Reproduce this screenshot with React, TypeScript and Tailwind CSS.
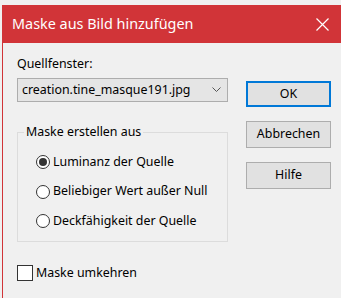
const font = { fontFamily: '"Noto Sans", "Open Sans", sans-serif' }

function Radio({ label, checked }: { label: string; checked?: boolean }) {
  return (
    <div className="flex items-center h-[20px]">
      <div className="w-[14px] h-[14px] rounded-full border border-[#333] bg-white flex items-center justify-center">
        {checked && <div className="w-[8px] h-[8px] rounded-full bg-[#333]" />}
      </div>
      <span className="ml-[3px] text-[12.4px] text-black leading-none">{label}</span>
    </div>
  )
}

function Btn({ label, focus }: { label: string; focus?: boolean }) {
  return (
    <button
      className={
        'w-[85px] flex items-center justify-center text-[12.4px] text-black bg-[#e1e1e1] ' +
        (focus ? 'h-[26px] border-2 border-[#0078d7]' : 'h-[27px] border border-[#adadad]')
      }
    >
      {label}
    </button>
  )
}

export default function App() {
  return (
    <div className="w-[341px] h-[298px] bg-[#f0f0f0] pt-[5px] pl-[2px] overflow-hidden" style={font}>
      <div className="h-full border-l border-[#d13438] flex flex-col">
        {/* Title bar */}
        <div className="h-[38px] bg-[#d13438] flex items-center justify-between pl-[9px] pr-[12px] shrink-0">
          <span className="text-white text-[14.4px]">Maske aus Bild hinzufügen</span>
          <svg width="13" height="13" viewBox="0 0 13 13">
            <path d="M0.5 0.5 L12.5 12.5 M12.5 0.5 L0.5 12.5" stroke="white" strokeWidth="1.2" />
          </svg>
        </div>

        {/* Body */}
        <div className="flex pl-[14px] pt-[12px] gap-[18px]">
          <div className="w-[211px] flex flex-col">
            <div className="text-[12.4px] text-black leading-[18px]">Quellfenster:</div>
            <div className="mt-[5px] h-[24px] bg-[#e5e5e5] border border-[#adadad] flex items-center justify-between pl-[4px] pr-[6px]">
              <span className="text-[12.4px] text-black">creation.tine_masque191.jpg</span>
              <svg width="9" height="6" viewBox="0 0 9 6">
                <path d="M0.5 0.5 L4.5 4.5 L8.5 0.5" stroke="#555" fill="none" strokeWidth="1" />
              </svg>
            </div>

            <div className="relative mt-[30px] h-[110px] border border-[#dcdcdc] pl-[18px] pt-[19px] flex flex-col gap-[9.5px]">
              <span className="absolute -top-[10px] left-[6px] bg-[#f0f0f0] px-[2px] text-[12.4px] text-black leading-[18px]">
                Maske erstellen aus
              </span>
              <Radio label="Luminanz der Quelle" checked />
              <Radio label="Beliebiger Wert außer Null" />
              <Radio label="Deckfähigkeit der Quelle" />
            </div>

            <div className="mt-[22px] flex items-center">
              <div className="w-[16px] h-[16px] border border-[#333] bg-white" />
              <span className="ml-[3px] text-[12.4px] text-black">Maske umkehren</span>
            </div>
          </div>

          <div className="flex flex-col pt-[26px] gap-[14px]">
            <Btn label="OK" focus />
            <Btn label="Abbrechen" />
            <Btn label="Hilfe" />
          </div>
        </div>
      </div>
    </div>
  )
}
